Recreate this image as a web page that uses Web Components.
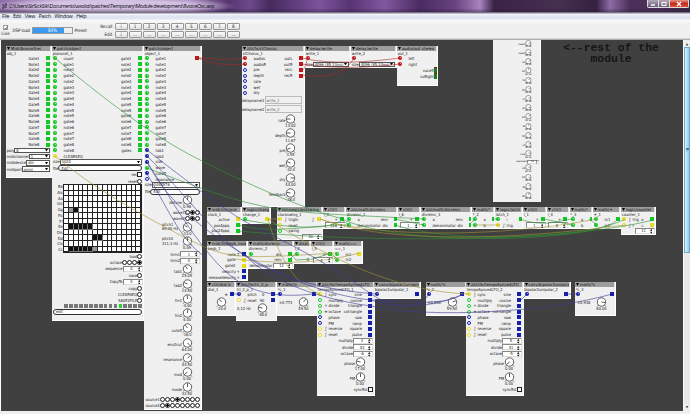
<!DOCTYPE html>
<html lang="en"><head><meta charset="utf-8"><title>8voiceOsc.axp</title>
<style>
html,body{margin:0;width:690px;height:414px;overflow:hidden;background:#efefef}
body{font-family:"DejaVu Sans Condensed","DejaVu Sans",sans-serif;font-stretch:condensed}
</style></head><body>
<patch-window></patch-window>
<script>
const COL={g:'#12c825',b:'#1420a8',r:'#c01616',y:'#e8dc20'};
const define=(name,css,render)=>customElements.define(name,class extends HTMLElement{
  connectedCallback(){
    if(!this.shadowRoot){const t=document.createElement('template');
      t.innerHTML='<style>*{box-sizing:border-box}'+css+'</style>'+render(this);
      this.attachShadow({mode:'open'}).append(t.content.cloneNode(true));}
  }});

define('title-bar',`:host{display:flex;height:12px;align-items:center;padding-left:2px;color:#0a0510;font:5.3px "Open Sans",sans-serif;
 background:linear-gradient(#0000 0 70%,#2a183870),
 radial-gradient(ellipse 125px 9px at 112px 6px,#d9c9e6e0 60%,#a88cc000),
 linear-gradient(90deg,#8d6fa8 0,#b79bcb 60px,#a386bb 190px,#553570 228px,#6d4a8b 250px,#46295e 270px,#7b549c 320px,#573472 350px,#8058a0 385px,#4a2b60 420px,#67427f 455px,#a784bd 480px,#3a2347 494px,#463050 560px,#33203f 596px,#8d6ba6 610px,#4a3058 630px,#4a3058 660px,#3a2745)}
 svg{width:6px;height:6px;margin-right:1px} .t{flex:1;white-space:nowrap;letter-spacing:-.36px}
 .w{display:flex;align-self:flex-start;height:8px;margin-right:1px;border:.5px solid #ddd;border-top:0;border-radius:0 0 2px 2px;overflow:hidden}
 .w i{display:flex;align-items:center;justify-content:center;width:11px;background:linear-gradient(#b5a8bd,#6b5a78);border-right:.5px solid #ddd}
 .w i:last-child{width:18px;background:linear-gradient(#e39a8c,#c8291a 50%,#d85638);border:0} .w svg{margin:0;width:6px;height:6px}`,
()=>`<svg viewBox="0 0 6 6"><path d="M0 2h2v3H0M3 1h2M4 1v4" fill="none" stroke="#35243f"/></svg><span class="t">C:\\Users\\SirSickSik\\Documents\\axoloti\\patches\\Temporary\\Module development\\8voiceOsc.axp</span>
<div class="w"><i><svg viewBox="0 0 6 6"><path d="M1 4h4" stroke="#fff" stroke-width="1.3"/></svg></i><i><svg viewBox="0 0 6 6"><rect x="1" y="1.5" width="4" height="3" fill="none" stroke="#fff"/></svg></i><i><svg viewBox="0 0 6 6"><path d="M1 1l4 4M5 1L1 5" stroke="#fff" stroke-width="1.3"/></svg></i></div>`);

define('menu-bar',`:host{display:flex;height:8px;align-items:center;gap:3.7px;padding-left:2px;color:#111;font:5.1px "Open Sans",sans-serif;letter-spacing:-.22px;background:linear-gradient(#7c7488 0 1px,#fbfcfe 2px,#dce3f1 4px,#dfe6f4 7px,#f4f4f6)}`,
()=>['File','Edit','View','Patch','Window','Help'].map(m=>`<span>${m}</span>`).join(''));

define('tool-bar',`:host{display:flex;height:20px;align-items:center;padding:1px 0 0 1px;font:4.6px "DejaVu Sans Condensed","DejaVu Sans",sans-serif;font-stretch:condensed;color:#222;background:linear-gradient(#fafafa,#f0f0f0 4px,#efefef 18px,#999)}
 .live{display:flex;flex-direction:column;align-items:center;width:9px;gap:1px} .live i{width:5px;height:5px;border:.7px solid #9a9a9a;background:#fff}
 .live svg{display:block;width:4px;height:4px}
 .dsp{margin-left:2.5px;width:19.5px;white-space:nowrap;letter-spacing:-.15px} .bar{width:41px;height:6.5px;border:.6px solid #999;background:linear-gradient(90deg,#3a9af2 80%,#eee 80%);color:#fff;text-align:center;line-height:5.5px}
 .p{margin-left:1.5px;width:20px;letter-spacing:-.1px} .l{width:18px;text-align:right;display:flex;flex-direction:column;gap:3px;margin-right:2px;line-height:5.2px}
 .g{display:grid;grid-template-columns:repeat(9,13px);grid-auto-rows:6.9px;gap:1px 1.05px}
 .g b{display:flex;align-items:center;justify-content:center;font-weight:400;background:linear-gradient(#fafafa,#e2e2e2);border:.6px solid #979797;border-radius:1px}`,
()=>`<div class="live"><i><svg viewBox="0 0 4 4"><path d="M.7 2l1 1.2L3.4.5" fill="none" stroke="#345" stroke-width=".8"/></svg></i><span>Live</span></div><span class="dsp">DSP load</span><div class="bar">83%</div><span class="p">Preset</span><div class="l"><span>Recall</span><span>Edit</span></div><div class="g">${['i',1,2,3,4,5,6,7,8].map(v=>`<b>${v}</b>`).join('')}<b>i</b>${'<b>...</b>'.repeat(8)}</div>`);

define('scroll-bar',`:host{display:flex;flex-direction:column;width:7px;background:#e9e9e9;border-left:1px solid #fafafa}
 .a{height:7px;display:flex;align-items:center;justify-content:center;background:#eee;font-size:3px;color:#333}
 .t{height:206px;display:flex;align-items:center;justify-content:center;background:linear-gradient(90deg,#d8f1fc,#a5d8f3 70%,#8fc9e8);border:.7px solid #72a9c8}
 .t i{width:3px;height:4px;background:repeating-linear-gradient(#457f9c 0 .7px,#9fcde0 .7px 1.4px)} .s{flex:1}`,
()=>`<div class="a">▲</div><div class="t"><i></i></div><div class="s"></div><div class="a">▼</div>`);

define('io-port',`:host{display:flex;align-items:center;height:5.75px;white-space:nowrap}
 :host([out]){flex-direction:row-reverse} i{width:4px;height:4px;margin:0 1.3px;flex:none;border-radius:50%;background:radial-gradient(circle at 60% 35%,#fff8 0 .5px,#0000 .8px),var(--c)}
 :host([out]) i{border-radius:0;width:4px;height:4px;background:var(--c)} :host([hollow]) i{border:1.1px solid var(--c);background:#fff}
 span{margin-left:5px}:host([mark]) span{margin-left:.4px} :host([out]) span{margin:0 5px 0 0}:host([out][mark]) span{margin-right:0} em{font-style:normal;width:4.6px;text-align:center;font-size:4.4px}`,
e=>`<i style="--c:${COL[e.getAttribute('c')]}"></i>${e.hasAttribute('mark')?`<em>${e.getAttribute('mark')}</em>`:''}<span><slot></slot></span>`);

define('dial-knob',`:host{display:flex;height:100%;justify-content:flex-end;padding-right:4.5px;position:relative}
 .l{flex:1;display:flex;flex-direction:column;align-items:flex-end;padding-top:4.6px;white-space:nowrap}.l.two{padding-top:.3px;align-items:flex-start}
 .d{width:18px;display:flex;flex-direction:column;align-items:center} .l+.d{margin-left:-4px}
 svg{width:11px;height:10.3px;flex:none} .v{line-height:4px;margin-top:-.2px}.two+.d{margin-left:-4px}`,
e=>{const a=(+e.getAttribute('angle')||0)*Math.PI/180,x=(5.5+3.6*Math.sin(a)).toFixed(1),y=(5-3.6*Math.cos(a)).toFixed(1);
 const hz=e.getAttribute('hz'),l=e.getAttribute('label')||'';
 return `<div class="l${hz?' two':''}" ${hz?`style="padding-left:${e.getAttribute('pad')||2}px;line-height:4.7px;padding-top:${l?1:4}px"`:''}><span>${l}</span>${hz?`<span>${hz}</span>`:''}</div><div class="d"><svg viewBox="0 0 11 10.3"><path d="M1 9.7l1.7-1.8M10 9.7L8.300 7.900" stroke="#222" stroke-width=".6"/><circle cx="5.5" cy="5" r="4.200" fill="#fff" stroke="#222" stroke-width=".7"/><path d="M5.500 5L${x} ${y}" stroke="#111" stroke-width=".7"/></svg><span class="v">${e.getAttribute('value')}</span></div>`});

define('spin-box',`:host{display:flex;height:100%;align-items:center;justify-content:flex-end;padding-right:.5px;white-space:nowrap}
 div{display:flex;width:20px;height:6px;align-items:center;justify-content:center;background:#fff;border:.7px solid #888;border-right-color:#ddd;border-bottom-color:#ddd;padding-right:2px;position:relative}
 svg{position:absolute;right:1.2px;top:.4px;width:2.5px;height:4.5px}`,
e=>`<span>${e.getAttribute('label')||''}</span><div>${e.getAttribute('value')}<svg viewBox="0 0 5 9"><path d="M0 3.500L2.500 0L5 3.500zM0 5.500L2.500 9L5 5.500z"/></svg></div>`);

define('combo-box',`:host{display:flex;height:100%;align-items:center;padding:0 .7px;white-space:nowrap}
 div{flex:1;display:flex;height:5.300px;align-items:center;justify-content:space-between;background:#fff;border:.8px solid #555;padding:0 1px;overflow:hidden}
 svg{width:3px;height:2.500px;flex:none}`,
e=>`<span>${e.getAttribute('label')}</span><div><span>${e.getAttribute('value')}</span><svg viewBox="0 0 6 5"><path d="M0 0h6L3 5z"/></svg></div>`);

define('text-field',`:host{display:flex;height:100%;align-items:center;padding-right:2.500px;white-space:nowrap}
 div{flex:1;height:8.500px;display:flex;align-items:center;border:.7px solid #bbb;padding-left:1px;color:#666} span{width:22.500px}`,
e=>`<span>${e.getAttribute('label')}</span><div>${e.getAttribute('value')}</div>`);

define('pill-button',`:host{display:flex;height:100%;align-items:center;padding:0 1px;white-space:nowrap}
 div{flex:1;height:5.800px;display:flex;align-items:center;border:.7px solid #333;border-radius:3px;background:#fff;padding-left:2px}`,
e=>`<span>${e.getAttribute('label')||''}</span><div>${e.getAttribute('value')}</div>`);

define('toggle-row',`:host{display:flex;height:100%;align-items:center;justify-content:flex-end;padding-right:.8px;white-space:nowrap}
 i{width:5px;height:5px;border:.7px solid #222;border-radius:50%;background:#fff} i.sq{border-radius:0} i.on{background:radial-gradient(#000 60%,#fff 62%)}`,
e=>{const n=+e.getAttribute('n')||1,on=+e.getAttribute('on')||0,sq=e.hasAttribute('square');
 return `<span>${e.getAttribute('label')}</span>`+Array.from({length:n},(_,k)=>`<i class="${sq?'sq':''} ${k+1===on?'on':''}"></i>`).join('')});

define('note-grid',`:host{display:flex;height:100%;padding:.3px .8px 0 1px;gap:.5px}
 .l{flex:1;display:grid;grid-template-rows:repeat(12,1fr);align-items:center;justify-items:end;line-height:4px}
 .g{width:79px;display:grid;grid-template:repeat(12,1fr)/repeat(16,1fr);border:.6px solid #222;background:#fff} .g i{border:solid #222;border-width:0 .7px .9px 0}
 .g .k{background:#111;border-color:#777}.g .h{background:#999}`,
()=>{const m={4:{1:'h',2:'k'},7:{1:'k',2:'k',3:'k',4:'k',5:'k'},9:{6:'k',7:'k'},11:{1:'k',2:'k',3:'k',4:'k',5:'k',6:'h'}};
 let s='<div class="l">'+['Bb','Ais','Aa','Gis','Gg','Fis','Ff','Ee','Dis','Dd','Cis','Cc'].map(x=>`<span>${x}</span>`).join('')+'</div><div class="g">';
 for(let r=0;r<12;r++)for(let c=0;c<16;c++)s+=`<i class="${(m[r]||{})[c]||''}"></i>`;return s+'</div>'});

define('led-row',`:host{display:flex;height:100%;align-items:center;justify-content:flex-end;gap:1.200px;padding-right:1px} i{width:3.750px;height:4px;background:#777} i.on{background:#20d830}`,
()=>Array.from({length:16},(_,k)=>`<i class="${k===11?'on':''}"></i>`).join(''));

define('vu-meter',`:host{display:flex;height:100%;align-items:center;justify-content:flex-end} i{width:3px;height:6px;background:linear-gradient(#7a2418 0 1px,#1d7a22 1px)}`,
e=>`<span>${e.getAttribute('label')}</span><i></i>`);

// Patch object: header, instance name, inlets and outlets, then its controls.
define('patch-node',`:host{display:block;position:absolute;background:#f0f0f0;font:var(--fs,4px)/5px "DejaVu Sans Condensed","DejaVu Sans",sans-serif;font-stretch:condensed;color:#111;overflow:hidden;border-right:.5px solid #fff;border-bottom:.5px solid #fff}
 header{height:5px;display:flex;align-items:center;gap:1px;background:#9d9d9d;padding-left:1px;white-space:nowrap;overflow:hidden;border-right:.6px solid #ddd;color:#000;letter-spacing:.16px}
 header svg{width:3px;height:3px;flex:none}.n{height:4.900px;padding-left:.8px;white-space:nowrap}
 .io{display:grid;grid-template-columns:1fr auto}.io div:last-child{grid-column:2}`,
e=>`<header><svg viewBox="0 0 6 6"><path d="M0 0h6L3 6z"/></svg><span><slot name="kind"></slot></span></header><div class="n"><slot name="name"></slot></div><div class="io"><div><slot name="in"></slot></div><div><slot name="out"></slot></div></div><slot></slot>`);
define('control-strip',`:host{display:block;position:absolute;background:#f0f0f0;zoom:.62;font:4px/5px "DejaVu Sans Condensed","DejaVu Sans",sans-serif;overflow:hidden;border-right:1px solid #fff}`,()=>`<slot></slot>`);

define('wire-layer',`:host{position:absolute;inset:0;pointer-events:none} svg{display:block;width:100%;height:100%}`,()=>{
 const W={
 '#a82a2a':['M198 58C212 58 225 61 245 58','M198 58C212 64 228 66 245 64','M302 58C330 65 370 62 400 58','M302 64C330 69 370 68 400 64','M302 70C305 70 306 62 308 58','M302 75C325 79 345 74 354 58'],
 '#2f8f35':['M56 59C120 112 160 140 202 161S300 208 343 219','M147 168C190 184 235 203 279 209S335 214 424 219','M239 225C270 235 320 224 349 225','M245 220C300 230 330 229 342 220L349 225','M395 219L424 225','M469 225L475 219','M492 219L498 219','M520 219C545 228 560 220 572 219','M544 219L572 225','M589 219L597 225','M239 231C350 242 560 244 653 220','M395 225C450 244 590 239 625 219','M342 219C400 247 600 243 618 219','M290 253L296 260L313 259L331 253','M290 259L296 253','M331 253L337 259'],
 '#a09432':['M55 156C90 186 140 214 180 235S230 258 283 256L337 253','M268 219L279 219','M268 219C275 245 290 284 320 294','M235 259C280 264 320 264 359 253','M320 219C360 234 480 241 597 219','M320 219C390 245 520 239 625 225','M268 219C330 260 400 292 469 294','M475 225L500 225'],
 '#3a3a98':['M147 150C175 172 220 206 239 218S310 250 371 294','M147 156C180 188 215 236 245 256S320 290 377 294','M147 162C170 205 205 232 250 258S340 297 371 300','M147 174C165 202 180 242 207 258','M147 162C168 194 185 225 210 255S260 300 313 294','M233 294L239 294','M245 254C260 275 310 298 371 306','M371 294C395 310 420 309 429 294','M371 300C400 312 445 304 463 294','M371 306C430 319 550 312 612 294','M463 294C440 308 400 300 371 300','M521 300L527 294','M566 294L578 294'],
 };
 return '<svg viewBox="0 0 690 414" fill="none" stroke-width=".6">'+Object.entries(W).map(([c,l])=>`<g stroke="${c}">${l.map(d=>`<path d="${d}"/>`).join('')}</g>`).join('')+'</svg>'});

define('canvas-note',`:host{display:block;position:absolute;left:553px;top:42.5px;width:116px;text-align:center;font:bold 11.4px/11px "Liberation Mono",monospace;color:#151515}`,()=>`<slot></slot>`);

const gn=(a='gate',b='note')=>[1,2,3,4,5,6,7,8].flatMap(i=>[a+i+':g',b+i+':g']);
const D=(label,value,angle,h=14.8,x='')=>`<dial-knob label="${label}" value="${value}" angle="${angle}" ${x} style="height:${h}px"></dial-knob>`;
const S=(label,value,h=6.2)=>`<spin-box label="${label}" value="${value}" style="height:${h}px"></spin-box>`;
const C=(label,value,x=0,h=6.2)=>`<combo-box label="${label}" value="${value}" style="height:${h}px;margin-left:${x}px"></combo-box>`;
const T=(label,h=6.1,n=1,on=0,sq='')=>`<toggle-row label="${label}" n="${n}" on="${on}" ${sq} style="height:${h}px"></toggle-row>`;
const P=(label,value,h,x=0)=>`<pill-button label="${label}" value="${value}" style="height:${h}px;margin-left:${x}px"></pill-button>`;
const port=(s,dir)=>{const[l,c,m]=s.split(':');return `<io-port slot="${dir}" ${dir==='out'?'out':''} ${/[A-Z]/.test(c)?'hollow':''} c="${c.toLowerCase()}" ${m?`mark="${m}"`:''}>${l}</io-port>`};
const N=(x,y,r,b,kind,name,ins,outs,body='')=>`<patch-node style="left:${x}px;top:${y}px;width:${r-x}px;height:${b-y}px"><span slot="kind">${kind}</span><span slot="name">${name}</span>${ins.map(s=>port(s,'in')).join('')}${outs.map(s=>port(s,'out')).join('')}${body}</patch-node>`;
const lfo=(x,n,m,d,o,p,a)=>N(x,281.5,x+57.5,396,'zzz/lfo/tempoSyncedLFO','tempoSyncedLFO_'+n,['sync:y:∫','multiply:G','divide:G:+','octave:G:±','phase:B','PM:B','reverse:Y:∫','reset:Y:∫'],['sine','cosine','triangle','cotriangle','saw','ramp','square','pulse'].map(s=>s+':b'),S('multiply',m,6.5)+S('divide',d,6.5)+S('octave',o,6.5)+D('phase',p,a)+D('PM','0.00',0)+T('syncRst',6,1,0,'square'));
const mulc=(x,n,k,v,a)=>N(x,281.5,x+41,316,'math/*c','*c_'+n,[':b'],[':b'],D('',v,a,14.8,`hz="×${k}" pad="2"`));
const bip=(x,n)=>N(x,281.5,x+47,298.5,'conv/bipolar2unipolar','bipolar2unipolar_'+n,[':b'],[':b']);
const y1=206.5,y2=241.3,y3=281.5,t=45.5;
const nodes=()=>[
N(6,t,52,178,'Midi/8voice2rec','obj_1',[],gn('Gate','Note'),C('poly','8')+C('midichannel','1')+C('mididevice','din')+C('midiport','omni')),
N(52,t,144,321,'patch/object','pianoroll_1',['count:g',...gn(),'CLEARSEQ:y'],[...gn(),'gates:g'],
 C('size','1024')+P('file','Edit',6.6)+T('rec',6.4,1,0,'square')+T('reset',6)+`<note-grid style="height:69px"></note-grid>`+T('load')+T('octave',6.1,4,4)+S('sequence','0',6.9)+T('save',6)+S('CopyTo','0',6.9)+T('copy')+T('CLEARSEQ')+T('SAVE2FILE')+`<led-row style="height:5px"></led-row>`+P('','edit',6.6)),
N(144,t,201.5,410,'patch/object','object_1',[...gn(),'tab1:b','tab2:b','size:b','wave:g','cutoff:b','resonance:B'],[':r'],
 C('size','1048576')+P('file','Edit',7.2)+D('detune','0.96',5,14.5)+T('wave1',6,3,2)+T('wave2',6,3,2)+D('pitch1','-13.0',-60,14.3,'hz="69,00 Hz" pad="18"')+D('pitch2','0.09',0,14.6,'hz="311,3 Hz" pad="18"')+S('hrm1','1',6.7)+S('hrm2','0',6.7)+
 [['tab1','25.05',-35],['tab2','14.50',-65],['fm1','-4.00',-5],['fm2','4.00',5],['cutoff','-16.0',-40],['env2cut','64.00',135],['resonance','44.50',50],['mod','0.00',-130],['mode','32.50',0]].map(d=>D(...d,14.75)).join('')+T('source1',6,8,4)+T('source2',6,8,2)),
N(242,t,305,206.5,'zzz/fx/stChorus','stChorus_1',['audioL:r','audioR:r','pre:B','depth:B','rate:B','wet:B','dry:B'],['outL:r','outR:r','recL:r','recR:r'],
 ['1','2'].map(i=>`<text-field label="delayname${i}" value="write_${i}" style="height:9px"></text-field>`).join('')+[['rate','13.00',-90],['depth','11.67',-90],['pre','3.55',-115],['wet','-32.0',-70],['dry','44.00',90],['feedback','-38.0',-80]].map(d=>D(...d)).join('')),
N(305,t,351,68,'delay/write','write_1',[':r'],[],C('size','4096 (85.33ms)')),
N(351,t,397,68,'delay/write','write_2',[':r'],[],C('size','4096 (85.33ms)')),
N(397,t,438,86,'audio/out stereo','out_1',['left:r','right:r'],[],['vuLeft','vuRight'].map(l=>`<vu-meter label="${l}" style="height:6.3px"></vu-meter>`).join('')),
N(207,y1,242,235,'midi/in/clock','clock_1',[],['active:y','pos4ppq:g','pos24ppq:g']),
N(242,y1,271,224,'logic/change','change_1',[':g'],[':y']),
N(277,y1,323,240.3,'zzz/seq/clockswing','clockswing_1',['trigIn:y:∫','reset:Y','swing:G'],[':y:∫'],S('','30',6.6)),
N(323,y1,346,229,'ctrl/i','i_3',[],[':g:+'],S('','128')),
N(346,y1,398,229,'zzz/math/divremc','divremc_1',['a:g','denominator:g'],['rem:g','div:g']),
N(398,y1,421,229,'ctrl/i','i_6',[],[':g:+'],S('','1')),
N(421,y1,472,229,'zzz/math/divremc','divremc_3',['a:g','denominator:g'],['rem:g','div:g']),
N(472,y1,495,229,'math/*','*_2',['a:g','b:g'],[':g']),
N(495,y1,523,229,'logic/latch','latch_1',['i:g','trig:y:∫'],[':g']),
N(523,y1,547,229,'ctrl/i','i_1',[],[':g:+'],S('','1')),
N(547,y1,569.500,229,'ctrl/i','i_4',[],[':g:+'],S('','8')),
N(569.500,y1,593,229,'math/*','*_3',['a:g','b:g'],[':g']),
N(593,y1,621,229,'math/+','+_1',['in1:g','in2:g'],[':g']),
N(621,y1,656,235,'logic/counter','counter_1',['trig:y:∫','r:Y:∫'],['o:g','c:y'],S('','11',6)),
N(207,y2,248,281,'midi/in/keyb_mod','keyb_1',[],['note:b:↥','gate:y','gate2:y','velocity:b:+','releaseVelocity:b:+']),
N(248,y2,294,269.500,'math/divremc','divremc_2',[':g'],['div:g','rem:g'],S('denominator','12')),
N(294,y2,311,264,'displ/i','i_2',[':g'],[],'<div style="text-align:center;margin-left:12px">0</div>'),
N(311,y2,334,264,'ctrl/i','i_5',[],[':g:+'],S('','4')),
N(334,y2,362.500,264,'math/==','==_1',['in1:g','in2:g'],[':y']),
N(207,y3,236,316,'ctrl/dial b','dial_1',[],[':b:±'],D('','-24.0',-40)),
N(236,y3,277,321,'zzz/lfo/tri_2_p','tri_2_p_1',['pitch:b','reset:Y:∫'],['0:b','90:b'],D('','-48.0',-80,14.8,'hz="0,12 Hz" pad="1"')),
mulc(277,1,'0,773','49.50',40),lfo(317,1,'3','43','-6','17.00',-75),bip(374,1),
mulc(425.500,2,'0,930','59.50',70),lfo(466,2,'5','41','-5','0.00',-130),bip(523.500,2),mulc(575,3,'0,938','60.00',100)
].join('');
const strip=()=>{const L=['level1','level2','A1','D1','S1','R1','L1','A2','D2','S2','R2','L2','time'],M=['A3','D3','S3','R3'];
 const d=(l,i)=>D(l,i%3?'32.00':'64.00',[90,110,60,20,40,70][i%6],14.85,'class="in"').replace('style="','style="padding-right:9px;');
 return `<control-strip style="left:${493/.62}px;top:${39.800/.62}px;width:${47.500/.62}px;height:${162/.62}px">${L.map(d).join('')}${S('exponent','10',8)}${M.map(d).join('')}</control-strip>`};

define('patch-canvas',`:host{display:block;flex:1;background:#404040;border-left:1px solid #fff}`,
()=>nodes()+strip()+'<wire-layer></wire-layer><canvas-note>&lt;--rest of the<br>module</canvas-note>');

define('patch-window',`:host{display:flex;flex-direction:column;width:690px;height:414px;position:relative;background:#efefef}
 main{display:flex;height:370.500px}`,
()=>`<title-bar></title-bar><menu-bar></menu-bar><tool-bar></tool-bar><main><patch-canvas></patch-canvas><scroll-bar></scroll-bar></main>`);
</script></body></html>
